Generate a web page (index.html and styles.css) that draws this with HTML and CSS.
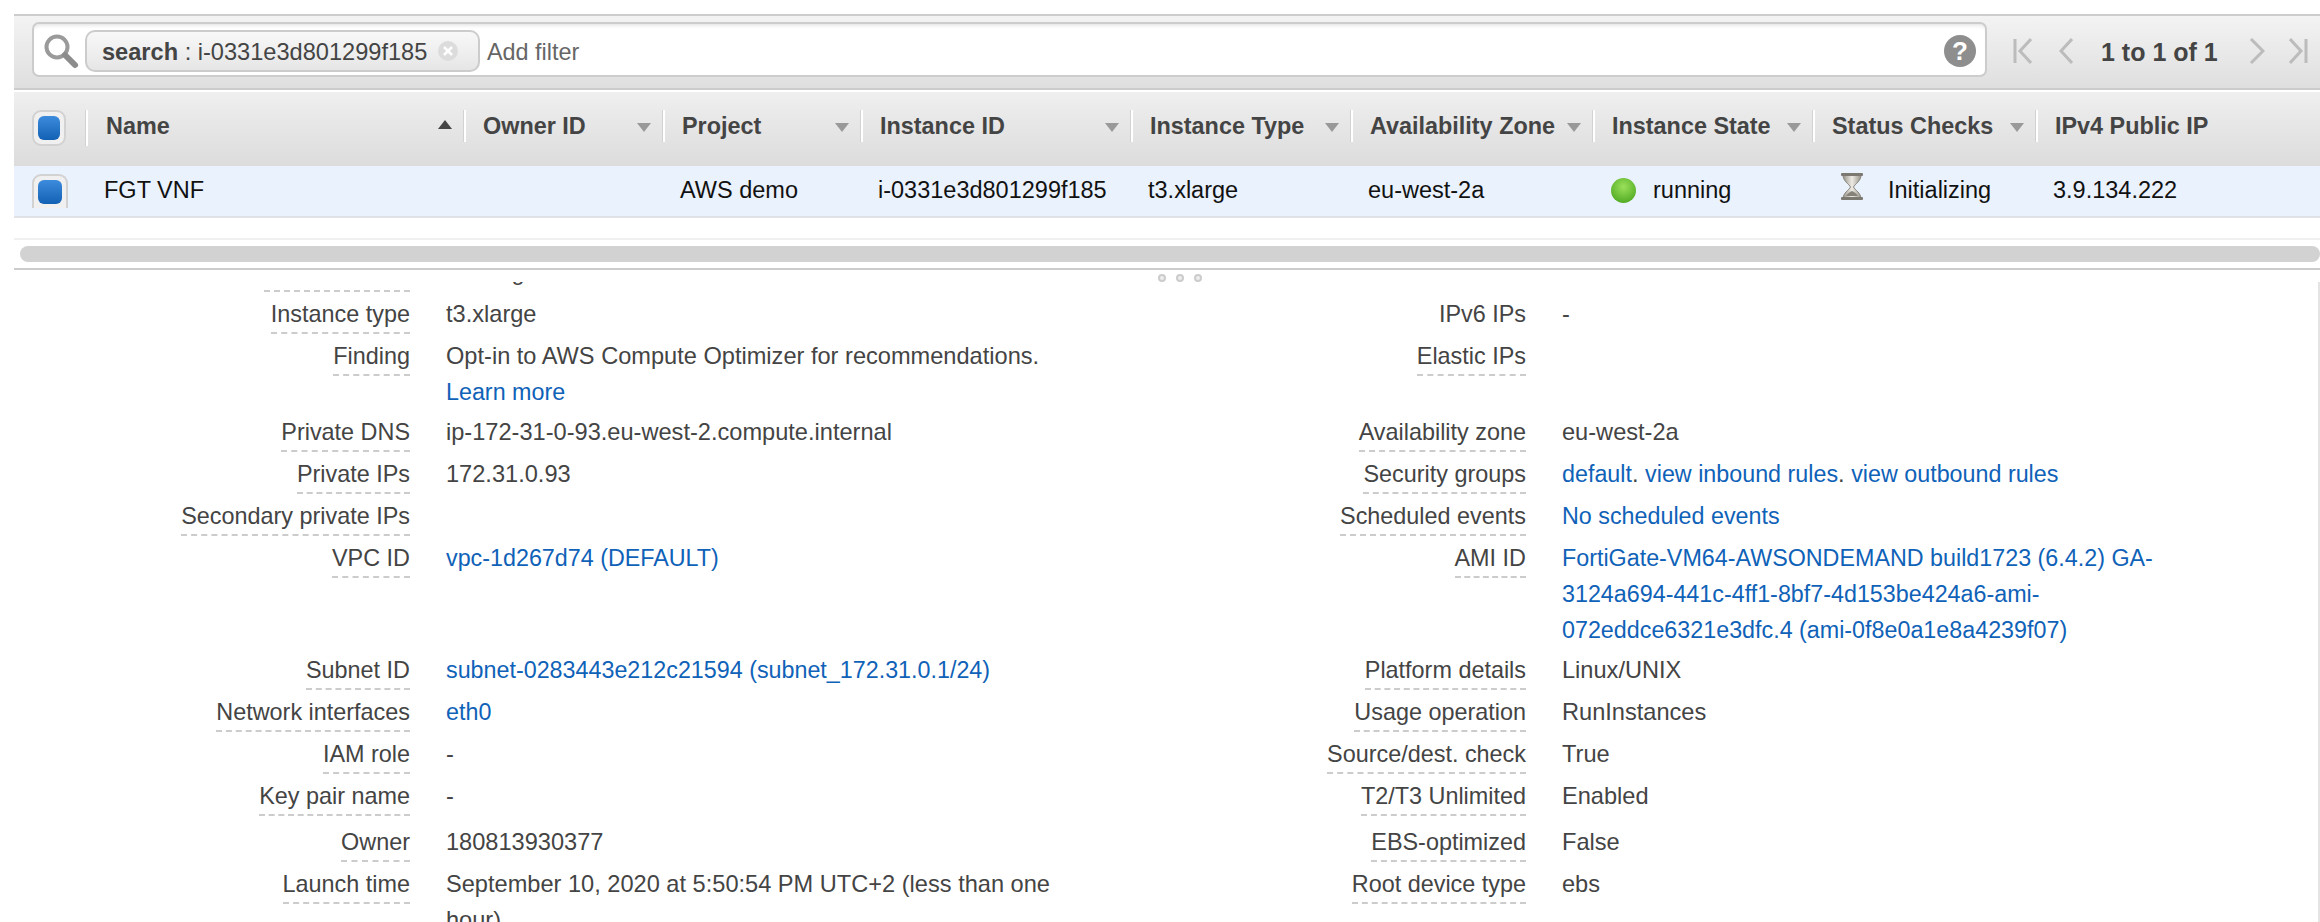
FILE: index.html
```html
<!DOCTYPE html>
<html lang="en">
<head>
    <meta charset="UTF-8">
    <title>EC2 Instances</title>
    <link rel="stylesheet" href="styles.css">
</head>
<body>
    <div class="console">
        <section class="toolbar">
            <div class="search-box">
                <svg class="search-icon" width="38" height="38" viewBox="0 0 38 38">
                    <circle cx="15" cy="15" r="10.5" fill="#fff" stroke="#9a9a9a" stroke-width="4"/>
                    <path d="M23 23l10 10" stroke="#8c8c8c" stroke-width="6" stroke-linecap="round"/>
                </svg>
                <div class="chip">
                    <span class="chip-text"><b>search</b> : i-0331e3d801299f185</span>
                    <svg class="chip-close" width="22" height="22" viewBox="0 0 22 22">
                        <circle cx="11" cy="11" r="10" fill="#dcdcdc"/>
                        <path d="M7 7l8 8M15 7l-8 8" stroke="#fff" stroke-width="2.5"/>
                    </svg>
                </div>
                <span class="add-filter">Add filter</span>
                <span class="help">?</span>
            </div>
            <div class="pager">
                <svg width="19" height="26" viewBox="0 0 19 26"><path d="M2 1v24M18 1L7 13l11 12" class="pager-line"/></svg>
                <svg class="pager-prev" width="14" height="26" viewBox="0 0 14 26"><path d="M13 1L2 13l11 12" class="pager-line"/></svg>
                <span class="pager-text">1 to 1 of 1</span>
                <svg class="pager-next" width="16" height="26" viewBox="0 0 16 26"><path d="M2 1l12 12L2 25" class="pager-line"/></svg>
                <svg class="pager-last" width="19" height="26" viewBox="0 0 19 26"><path d="M1 1l11 12L1 25M17 1v24" class="pager-line"/></svg>
            </div>
        </section>

        <section class="grid-head cols">
            <div class="check-cell"><span class="check"></span></div>
            <div class="head-cell first">Name<i class="sort up"></i></div>
            <div class="head-cell">Owner ID<i class="sort"></i></div>
            <div class="head-cell">Project<i class="sort"></i></div>
            <div class="head-cell">Instance ID<i class="sort"></i></div>
            <div class="head-cell">Instance Type<i class="sort"></i></div>
            <div class="head-cell">Availability Zone<i class="sort"></i></div>
            <div class="head-cell">Instance State<i class="sort"></i></div>
            <div class="head-cell">Status Checks<i class="sort"></i></div>
            <div class="head-cell">IPv4 Public IP</div>
        </section>

        <section class="grid-row cols">
            <div class="check-cell"><span class="check row-check"></span></div>
            <div class="cell name">FGT VNF</div>
            <div class="cell"></div>
            <div class="cell">AWS demo</div>
            <div class="cell">i-0331e3d801299f185</div>
            <div class="cell">t3.xlarge</div>
            <div class="cell">eu-west-2a</div>
            <div class="cell state"><span class="dot"></span>running</div>
            <div class="cell status">
                <svg width="24" height="30" viewBox="0 0 24 30">
                    <defs>
                        <linearGradient id="sand" x1="0" y1="0" x2="1" y2="0">
                            <stop offset="0" stop-color="#98948a"/>
                            <stop offset="0.5" stop-color="#ecebe4"/>
                            <stop offset="1" stop-color="#98948a"/>
                        </linearGradient>
                    </defs>
                    <path d="M3 3h18c0 6-6 9-7.500 12C15 18 21 21 21 27H3c0-6 6-9 7.500-12C9 12 3 9 3 3z" fill="url(#sand)" stroke="#86827a"/>
                    <path d="M6 24c2-3 4-4 6-5 2 1 4 2 6 5z" fill="#86827a"/>
                    <rect x="1" y="1" width="22" height="3" rx="1" fill="#7c7972"/>
                    <rect x="1" y="25" width="22" height="3" rx="1" fill="#7c7972"/>
                </svg>
                Initializing
            </div>
            <div class="cell">3.9.134.222</div>
        </section>

        <div class="scroll-area">
            <div class="scroll-thumb"></div>
        </div>

        <div class="handle"><i></i><i></i><i></i></div>

        <section class="details">
            <div class="row clipped">
                <span class="label"><span>Instance state</span></span>
                <div class="value">running</div>
            </div>
            <div class="row">
                <span class="label"><span>Instance type</span></span>
                <div class="value">t3.xlarge</div>
                <span class="label"><span class="plain">IPv6 IPs</span></span>
                <div class="value">-</div>
            </div>
            <div class="row">
                <span class="label"><span>Finding</span></span>
                <div class="value">Opt-in to AWS Compute Optimizer for recommendations.<br><a href="#">Learn more</a></div>
                <span class="label"><span>Elastic IPs</span></span>
                <div class="value"></div>
            </div>
            <div class="row">
                <span class="label"><span>Private DNS</span></span>
                <div class="value">ip-172-31-0-93.eu-west-2.compute.internal</div>
                <span class="label"><span>Availability zone</span></span>
                <div class="value">eu-west-2a</div>
            </div>
            <div class="row">
                <span class="label"><span>Private IPs</span></span>
                <div class="value">172.31.0.93</div>
                <span class="label"><span>Security groups</span></span>
                <div class="value"><a href="#">default</a>. <a href="#">view inbound rules</a>. <a href="#">view outbound rules</a></div>
            </div>
            <div class="row">
                <span class="label"><span>Secondary private IPs</span></span>
                <div class="value"></div>
                <span class="label"><span>Scheduled events</span></span>
                <div class="value"><a href="#">No scheduled events</a></div>
            </div>
            <div class="row">
                <span class="label"><span>VPC ID</span></span>
                <div class="value"><a href="#">vpc-1d267d74 (DEFAULT)</a></div>
                <span class="label"><span>AMI ID</span></span>
                <div class="value"><a href="#">FortiGate-VM64-AWSONDEMAND build1723 (6.4.2) GA-3124a694-441c-4ff1-8bf7-4d153be424a6-ami-072eddce6321e3dfc.4 (ami-0f8e0a1e8a4239f07)</a></div>
            </div>
            <div class="row">
                <span class="label"><span>Subnet ID</span></span>
                <div class="value"><a href="#">subnet-0283443e212c21594 (subnet_172.31.0.1/24)</a></div>
                <span class="label"><span>Platform details</span></span>
                <div class="value">Linux/UNIX</div>
            </div>
            <div class="row">
                <span class="label"><span>Network interfaces</span></span>
                <div class="value"><a href="#">eth0</a></div>
                <span class="label"><span>Usage operation</span></span>
                <div class="value">RunInstances</div>
            </div>
            <div class="row">
                <span class="label"><span>IAM role</span></span>
                <div class="value">-</div>
                <span class="label"><span>Source/dest. check</span></span>
                <div class="value">True</div>
            </div>
            <div class="row">
                <span class="label"><span>Key pair name</span></span>
                <div class="value">-</div>
                <span class="label"><span>T2/T3 Unlimited</span></span>
                <div class="value">Enabled</div>
            </div>
            <div class="row spaced">
                <span class="label"><span>Owner</span></span>
                <div class="value">180813930377</div>
                <span class="label"><span>EBS-optimized</span></span>
                <div class="value">False</div>
            </div>
            <div class="row">
                <span class="label"><span>Launch time</span></span>
                <div class="value">September 10, 2020 at 5:50:54 PM UTC+2 (less than one hour)</div>
                <span class="label"><span>Root device type</span></span>
                <div class="value">ebs</div>
            </div>
        </section>
    </div>
</body>
</html>
```

FILE: styles.css
```css
html, body {
    margin: 0;
    height: 100%;
    overflow: hidden;
    background: #fff;
}
body {
    font-family: "Liberation Sans", Arial, sans-serif;
    font-size: 23.4px;
    color: #444;
}
.console {
    height: 922px;
    overflow: hidden;
    padding: 14px 0 0 14px;
    box-sizing: border-box;
}

/* search bar */
.toolbar {
    display: flex;
    align-items: flex-start;
    height: 76px;
    padding: 6px 0 0 18px;
    box-sizing: border-box;
    border-top: 2px solid #ccc;
    border-bottom: 2px solid #ccc;
    background: linear-gradient(#f3f3f3, #dfdfdf);
}
.search-box {
    display: flex;
    align-items: center;
    width: 1955px;
    height: 55px;
    box-sizing: border-box;
    padding: 3px 0 0 8px;
    border: 2px solid #ccc;
    border-radius: 7px;
    background: #fff;
    box-shadow: inset 0 4px 4px -3px #ddd;
}
.search-icon {
    flex: none;
    width: 38px;
    margin-right: 5px;
}
.chip {
    display: flex;
    align-items: center;
    justify-content: space-between;
    width: 395px;
    height: 42px;
    box-sizing: border-box;
    padding: 0 19px 0 15px;
    border: 2px solid #ccc;
    border-radius: 10px;
    background: linear-gradient(#f8f8f8, #e6e6e6);
    font-size: 23.6px;
    white-space: nowrap;
}
.chip-text {
    padding-top: 2px;
}
.add-filter {
    margin-left: 7px;
    padding-top: 2px;
    color: #666;
}
.help {
    width: 32px;
    height: 32px;
    margin-left: auto;
    margin-right: 9px;
    border-radius: 50%;
    background: #8e8e8e;
    color: #fff;
    font-weight: bold;
    font-size: 26px;
    line-height: 32px;
    text-align: center;
}
.pager {
    display: flex;
    align-items: center;
    height: 55px;
    padding-top: 3px;
    box-sizing: border-box;
    margin-left: 26px;
}
.pager-line {
    fill: none;
    stroke: #bcbcbc;
    stroke-width: 3;
}
.pager-prev {
    margin-left: 27px;
}
.pager-text {
    margin-left: 28px;
    padding-top: 2px;
    font-weight: bold;
    font-size: 25px;
    white-space: nowrap;
}
.pager-next {
    margin-left: 31px;
}
.pager-last {
    margin-left: 24px;
}

/* instance table */
.cols {
    display: grid;
    grid-template-columns: 71px 378px 199px 198px 270px 220px 242px 220px 223px 1fr;
}
.grid-head {
    height: 76px;
    padding-top: 18px;
    box-sizing: border-box;
    border-top: 2px solid #fff;
    background: linear-gradient(#efefef, #dcdcdc);
    font-weight: bold;
}
.head-cell {
    display: flex;
    align-items: center;
    justify-content: space-between;
    height: 32px;
    padding: 0 11px 0 19px;
    border-left: 1px solid #d2d2d2;
    box-shadow: inset 2px 0 0 #fff;
    white-space: nowrap;
}
.head-cell.first {
    padding-left: 20px;
    padding-bottom: 4px;
    margin-bottom: -4px;
}
.sort {
    width: 0;
    height: 0;
    margin-top: 3px;
    border-left: 7px solid transparent;
    border-right: 7px solid transparent;
    border-top: 9px solid #999;
}
.sort.up {
    margin-top: -3px;
    border-top: 0;
    border-bottom: 9px solid #444;
}
.check-cell {
    padding-left: 18px;
}
.check {
    display: block;
    width: 34px;
    height: 36px;
    padding: 4px;
    box-sizing: border-box;
    border: 2px solid #d2d2d2;
    border-radius: 9px;
    background: #f0f0f0;
}
.check::before {
    content: "";
    display: block;
    height: 100%;
    border-radius: 6px;
    background: linear-gradient(#3d8bdc, #1361b4);
}
.row-check {
    width: 36px;
    height: 34px;
    margin-top: 8px;
    border-bottom: 0;
    border-radius: 9px 9px 0 0;
}
.grid-row {
    height: 52px;
    border-bottom: 2px solid #dfe3e8;
    box-sizing: border-box;
    background: #eaf2fd;
    color: #111;
    font-size: 23.5px;
    overflow: hidden;
}
.cell {
    display: flex;
    align-items: center;
    height: 48px;
    padding-left: 18px;
    white-space: nowrap;
}
.cell.name {
    padding-left: 19px;
}
.cell.state {
    padding-left: 19px;
}
.dot {
    width: 25px;
    height: 25px;
    margin-right: 17px;
    border-radius: 50%;
    background: radial-gradient(circle at 50% 35%, #9be05a, #3f9e16);
}
.cell.status {
    padding-left: 28px;
}
.status svg {
    margin-right: 24px;
    margin-top: -6px;
}
.scroll-area {
    height: 32px;
    margin-top: 20px;
    padding-top: 6px;
    box-sizing: border-box;
    border-top: 2px solid #f0f0f0;
    border-bottom: 2px solid #ccc;
}
.scroll-thumb {
    height: 16px;
    margin-left: 6px;
    border-radius: 8px;
    background: #d2d2d2;
}

/* resize handle */
.handle {
    display: flex;
    justify-content: center;
    gap: 10px;
    height: 12px;
    padding: 4px 0 0 26px;
    box-sizing: border-box;
}
.handle i {
    width: 8px;
    height: 8px;
    border-radius: 50%;
    border: 2px solid #ccc;
    background: #eee;
    box-sizing: border-box;
}

/* description pane */
.details {
    height: 640px;
    overflow: hidden;
    border-right: 2px solid #e4e4e4;
}
.row {
    display: grid;
    grid-template-columns: 396px 656px 460px 656px;
    align-items: start;
    padding-bottom: 4px;
    line-height: 36px;
}
.row.clipped {
    margin-top: -28px;
}
.row.spaced {
    margin-top: 4px;
}
.label {
    text-align: right;
}
.label span {
    display: inline-block;
    border-bottom: 2px dashed #ccc;
}
.label span.plain {
    border-bottom: 0;
}
.value {
    padding-left: 36px;
    font-size: 23.6px;
}
a {
    color: #0f62b8;
    font-size: 23.3px;
    text-decoration: none;
}
```
